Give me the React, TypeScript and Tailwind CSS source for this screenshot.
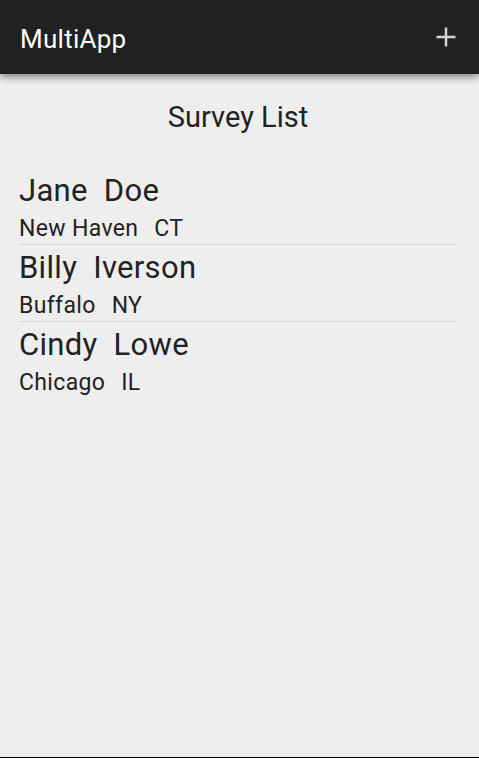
const surveys = [
  { first: "Jane", last: "Doe", city: "New Haven", state: "CT" },
  { first: "Billy", last: "Iverson", city: "Buffalo", state: "NY" },
  { first: "Cindy", last: "Lowe", city: "Chicago", state: "IL" },
];

export default function App() {
  return (
    <div className="flex h-[758px] flex-col bg-[#eeeeee] font-['Roboto',sans-serif] text-[#222222]">
      <header className="relative z-10 flex h-[74px] shrink-0 items-center justify-between bg-[#212121] pl-[20px] pr-[23px] shadow-[0_3px_8px_rgba(0,0,0,0.45)]">
        <h1 className="pt-[5px] text-[26px] tracking-[0.01em] text-white">MultiApp</h1>
        <svg width="20" height="20" viewBox="0 0 20 20" className="text-[#d4d4d4]">
          <rect x="8.75" y="0.5" width="2.5" height="19" fill="currentColor" />
          <rect x="0.5" y="8.75" width="19" height="2.5" fill="currentColor" />
        </svg>
      </header>
      <main className="flex-1 pl-[19px] pr-[22px]">
        <h2 className="mt-[27px] text-center text-[29px] leading-[32px]">Survey List</h2>
        <ul className="mt-[35px]">
          {surveys.map((s, i) => (
            <li key={s.first} className={i > 0 ? "border-t border-[#d8d8d8]" : ""}>
              <div className="flex gap-[16px] text-[31px] leading-[46px] tracking-[0.01em]">
                <span>{s.first}</span>
                <span>{s.last}</span>
              </div>
              <div className="flex gap-[16px] text-[23px] leading-[30px] tracking-[0.015em]">
                <span>{s.city}</span>
                <span>{s.state}</span>
              </div>
            </li>
          ))}
        </ul>
      </main>
      <div className="h-px bg-black" />
    </div>
  );
}
